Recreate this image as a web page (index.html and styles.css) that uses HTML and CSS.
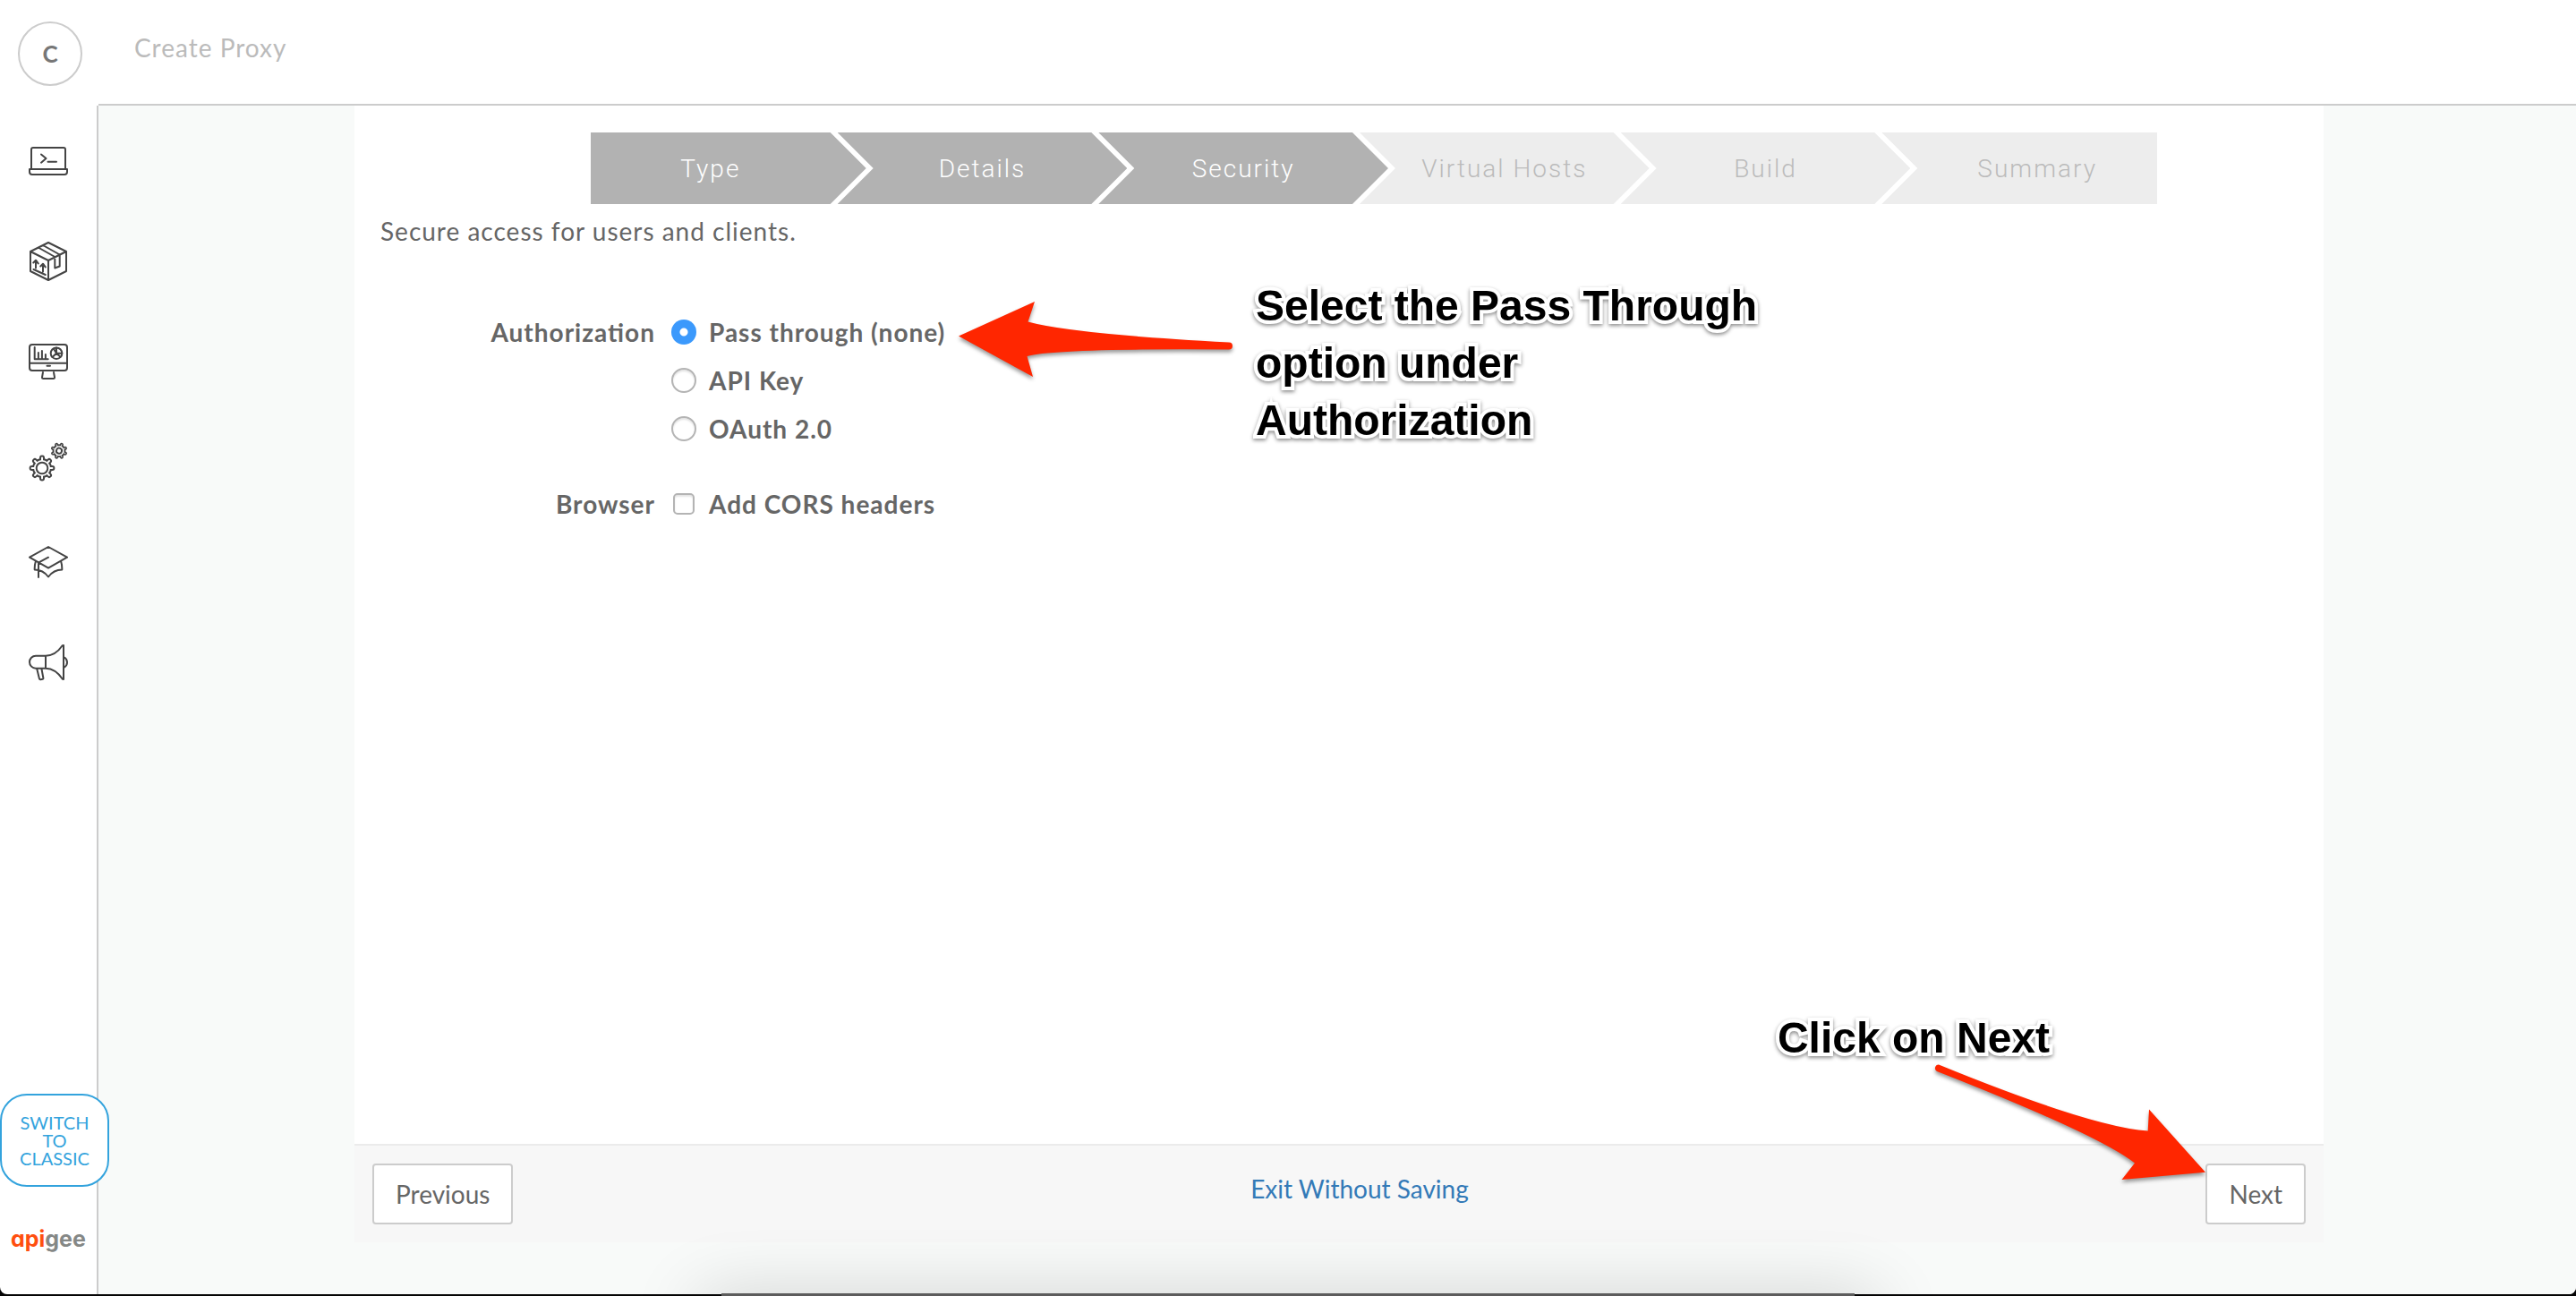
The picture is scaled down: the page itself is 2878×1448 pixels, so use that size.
FILE: index.html
```html
<!DOCTYPE html>
<html lang="en">
<head>
<meta charset="utf-8">
<title>Create Proxy</title>
<link rel="stylesheet" href="styles.css">
</head>
<body>
<div class="app">
  <div class="org"><button class="avatar" type="button">C</button></div>
  <header class="header"><h1 class="title">Create Proxy</h1></header>

  <aside class="sidebar">
    <nav class="nav">
      <a class="nav-link" href="#" aria-label="Develop">
        <svg class="icon" viewBox="0 0 44 44"><path d="M3 30V9a2 2 0 0 1 2-2h34a2 2 0 0 1 2 2v21M1 31h42v3a3 3 0 0 1-3 3H4a3 3 0 0 1-3-3zM14 14.500l5.500 4.500-5.500 4.700M21.500 22.700h9.500"/></svg>
      </a>
      <a class="nav-link" href="#" aria-label="Publish">
        <svg class="icon" viewBox="0 0 44 44"><path d="M22 1l20 10v22L22 43 2 33V11zM2 11l20 10 20-10M22 21v22M16 4l18.700 10.500v13l-5.400 2V17L10.700 6.500M8 21v8.500M5.300 23.500L8 20.700l2.700 3.700M16 25v8.500M13.300 27.500l2.700-2.800 2.700 3.700M5.500 31l13.200 6"/></svg>
      </a>
      <a class="nav-link" href="#" aria-label="Analyze">
        <svg class="icon" viewBox="0 0 44 44"><rect x="1" y="3" width="42" height="29" rx="3"/><path d="M1 23.700h42M20.500 26.700h3.500M16 34l-1 5.500a1.500 1.500 0 0 0 1.500 1.500h11a1.500 1.500 0 0 0 1.500-1.500L28 34M6.700 6v13.300h15M10.900 19v-7M14.900 19v-9M18.900 19v-5"/><circle cx="31" cy="12.700" r="6.300"/><path d="M31 6.500v6.200h6.300M31 12.700l-4.500 4.300M31 12.700l-3-5M31 12.700l4.500 4"/></svg>
      </a>
      <a class="nav-link" href="#" aria-label="Admin">
        <svg class="icon" viewBox="0 0 44 44">
          <g transform="translate(15 29)">
            <circle class="gear-dark" r="11"/><path class="teeth-dark" d="M-11.400 0h22.800M0-11.400v22.800M-8-8L8 8M8-8L-8 8"/>
            <circle class="gear-light" r="9"/><path class="teeth-light" d="M-11.400 0h22.800M0-11.400v22.800M-8-8L8 8M8-8L-8 8"/>
            <circle r="6.300"/>
          </g>
          <g transform="translate(34 9.700) rotate(22.500) scale(.66)">
            <circle class="gear-dark" r="11.200"/><path class="teeth-dark" d="M-11.400 0h22.800M0-11.400v22.800M-8-8L8 8M8-8L-8 8"/>
            <circle class="gear-light" r="8.400"/><path class="teeth-light thin" d="M-11.400 0h22.800M0-11.400v22.800M-8-8L8 8M8-8L-8 8"/>
            <circle class="hub" r="4.600"/>
          </g>
        </svg>
      </a>
      <a class="nav-link" href="#" aria-label="Learn">
        <svg class="icon" viewBox="0 0 44 44"><path d="M22 5l21 11.700-21 12-21-12zM22 16.700l-11 6V39M7.800 21.500q-1.300 4-1.100 9Q16 30.500 22 38.500q6-8 15.300-8 .2-5-1.100-9"/></svg>
      </a>
      <a class="nav-link" href="#" aria-label="Announcements">
        <svg class="icon" viewBox="0 0 44 44"><path d="M19 14.700H8a7 7 0 0 0 0 14h11zM19 14.700Q30 14.500 37.500 3.500 38 3 39 3v38q-1 0-1.500-.7Q30 29 19 28.700M40 16.500q3 2 3 5.500t-3 5.500M9.300 29.500L12 40.500q.3.800 1.300.7l2.400-.4q.8-.2.700-1L14.500 29.500"/></svg>
      </a>
    </nav>
    <button class="switch" type="button">SWITCH<br>TO<br>CLASSIC</button>
    <a class="logo" href="#"><span class="logo-api">api</span>gee</a>
  </aside>

  <main class="main">
    <form class="panel">
      <div class="content">
        <ol class="steps">
          <li class="step done">Type</li>
          <li class="step done">Details</li>
          <li class="step done">Security</li>
          <li class="step">Virtual Hosts</li>
          <li class="step">Build</li>
          <li class="step">Summary</li>
        </ol>
        <p class="intro">Secure access for users and clients.</p>

        <div class="fields">
          <div class="field" role="radiogroup" aria-labelledby="auth-label">
            <span class="field-label" id="auth-label">Authorization</span>
            <div class="options">
              <label class="option"><input class="radio" type="radio" name="auth" checked>Pass through (none)</label>
              <label class="option"><input class="radio" type="radio" name="auth">API Key</label>
              <label class="option"><input class="radio" type="radio" name="auth">OAuth 2.0</label>
            </div>
          </div>
          <div class="field" role="group" aria-labelledby="browser-label">
            <span class="field-label" id="browser-label">Browser</span>
            <div class="options">
              <label class="option"><input class="check" type="checkbox">Add CORS headers</label>
            </div>
          </div>
          <svg class="arrow arrow-left" viewBox="0 0 310 90" aria-hidden="true"><path d="M1 40.500L86 2l-7.500 22.500Q127 38 303 47.500a4 4 0 0 1 0 8Q110 54 77.500 63L84 86z"/></svg>
          <p class="note note-pass">Select the Pass Through<br>option under<br>Authorization</p>
        </div>
      </div>

      <div class="footer">
        <button class="button" type="button">Previous</button>
        <a class="exit" href="#">Exit Without Saving</a>
        <button class="button" type="button">Next</button>
        <p class="note note-next">Click on Next</p>
        <svg class="arrow arrow-right" viewBox="0 0 310 140" aria-hidden="true"><path d="M10 5.500Q180 75 243.700 79.500L245 55.500 308 125.700 214.500 134 229 115.500Q189 84 8 13A4 4 0 0 1 10 5.500z"/></svg>
      </div>
    </form>
  </main>
</div>
<div class="dock-area"><div class="dock"></div></div>
</body>
</html>
```
FILE: styles.css
```css
* { box-sizing: border-box; }

body {
  margin: 0;
  background: #050505;
  color: #666;
  font: 28px/40px Lato, "Open Sans", sans-serif;
}

.app {
  display: grid;
  grid-template: 118px 1fr / 110px 1fr;
  min-height: calc(100vh - 2px);
  background: #fff;
  border-radius: 0 0 8px 8px;
}

.org { padding: 24px 20px; }

.avatar {
  width: 72px;
  height: 72px;
  padding: 0;
  border: 2px solid #ccc;
  border-radius: 50%;
  background: #fff;
  color: #777;
  font: 700 26px/40px Lato, sans-serif;
}

.header {
  padding: 33px 40px;
  border-bottom: 2px solid #ccc;
}

.title {
  margin: 0;
  color: #bbb;
  font-size: 28px;
  font-weight: 400;
  line-height: 40px;
  letter-spacing: 1px;
}

.sidebar {
  display: flex;
  flex-direction: column;
  padding: 6px 0 42px;
  border-right: 2px solid #ccc;
}

.nav { flex: 1; }

.nav-link {
  display: flex;
  align-items: center;
  justify-content: center;
  height: 112px;
}

.icon {
  width: 44px;
  height: 44px;
  fill: none;
  stroke: #444;
  stroke-width: 2;
  stroke-linecap: round;
  stroke-linejoin: round;
}

.gear-dark { fill: #444; stroke: none; }
.gear-light { fill: #fff; stroke: none; }
.teeth-dark { stroke-width: 6; }
.teeth-light { stroke: #fff; stroke-width: 2; }
.teeth-light.thin { stroke-width: 1; }
.hub { stroke-width: 3; }

.switch {
  z-index: 1;
  width: 122px;
  height: 104px;
  padding: 0;
  border: 2px solid #33a3dd;
  border-radius: 30px;
  background: #fff;
  color: #33a3dd;
  font: 20px/20px Lato, sans-serif;
}

.logo {
  margin-top: 38px;
  padding-left: 12px;
  color: #858886;
  font: 700 25px/40px Inter, Lato, sans-serif;
  font-feature-settings: "cv11";
  text-decoration: none;
}

.logo-api { color: #ff4f0f; }

.main {
  display: flex;
  justify-content: center;
  padding: 0 0 58px 4px;
  background: #f8faf9;
  border-bottom-right-radius: 8px;
}

.panel {
  display: flex;
  flex-direction: column;
  width: 100%;
  max-width: 2200px;
  background: #fff;
}

.content {
  flex: 1;
  padding: 30px 29px;
}

.steps {
  display: grid;
  grid-template-columns: repeat(6, 1fr);
  max-width: 1828px;
  margin: 0 auto;
  padding: 0 0 0 78px;
  list-style: none;
}

.step {
  height: 80px;
  margin: 0 -16px;
  background: #ededed;
  clip-path: polygon(0 0, calc(100% - 40px) 0, 100% 50%, calc(100% - 40px) 100%, 0 100%, 40px 50%);
  color: #bbb;
  font: 300 28px/82px Roboto, "Liberation Sans", sans-serif;
  letter-spacing: 2px;
  text-align: center;
}

.step:first-child {
  margin-left: 0;
  padding-right: 40px;
  clip-path: polygon(0 0, calc(100% - 40px) 0, 100% 50%, calc(100% - 40px) 100%, 0 100%);
}

.step:last-child {
  margin-right: 0;
  padding-left: 40px;
  clip-path: polygon(0 0, 100% 0, 100% 100%, 0 100%, 40px 50%);
}

.step.done {
  background: #b2b2b2;
  color: #fff;
}

.intro {
  margin: 10px 0 0;
  letter-spacing: 1px;
}

.fields {
  position: relative;
  display: flex;
  flex-direction: column;
  gap: 30px;
  margin-top: 66px;
  font-weight: 700;
  letter-spacing: 1px;
}

.field {
  display: grid;
  grid-template-columns: 307px 1fr;
  gap: 18px;
  line-height: 54px;
}

.field-label {
  font-feature-settings: "liga";
  text-align: right;
}

.option {
  display: grid;
  grid-template-columns: 28px 1fr;
  align-items: center;
  gap: 14px;
}

.radio,
.check {
  appearance: none;
  margin: 0;
  border: 2px solid #b4b4b4;
  background: #fff;
  box-shadow: inset 0 2px 2px #e4e4e4;
}

.radio {
  width: 28px;
  height: 28px;
  border-radius: 50%;
}

.radio:checked {
  border: 0;
  background: radial-gradient(circle, #fff 4px, #3b99fc 5px);
  box-shadow: none;
}

.check {
  justify-self: center;
  width: 24px;
  height: 24px;
  border-radius: 5px;
}

.footer {
  position: relative;
  display: flex;
  align-items: flex-start;
  justify-content: space-between;
  padding: 20px;
  border-top: 2px solid #ebebeb;
  background: #f7f7f7;
}

.button {
  height: 68px;
  padding: 0 24px;
  border: 2px solid #ccc;
  border-radius: 4px;
  background: #fff;
  color: #666;
  font: 28px/40px Lato, sans-serif;
}

.exit {
  color: #337ab7;
  line-height: 56px;
  text-decoration: none;
}

.note {
  position: absolute;
  margin: 0;
  color: #000;
  font: 700 48px/64px "Liberation Sans", Arial, sans-serif;
  letter-spacing: 0;
  white-space: nowrap;
  paint-order: stroke fill;
  -webkit-text-stroke: 8px #fff;
  filter: drop-shadow(0 2px 2px rgba(0, 0, 0, .45));
}

.note-pass { left: 978px; top: -34px; }
.note-next { right: 306px; bottom: 196px; }

.arrow {
  position: absolute;
  fill: #ff2600;
  filter: drop-shadow(0 3px 2px rgba(0, 0, 0, .4));
}

.arrow-left {
  left: 645px;
  top: -9px;
  width: 310px;
  height: 90px;
}

.arrow-right {
  right: 130px;
  bottom: 64px;
  width: 310px;
  height: 140px;
}

.dock-area {
  position: fixed;
  inset: auto 0 0;
  display: flex;
  align-items: flex-end;
  justify-content: center;
  height: 120px;
  overflow: hidden;
  pointer-events: none;
}

.dock {
  width: 44%;
  height: 3px;
  background: #5c5c5c;
  box-shadow: 0 30px 80px 24px rgba(0, 0, 0, .2);
}
```
